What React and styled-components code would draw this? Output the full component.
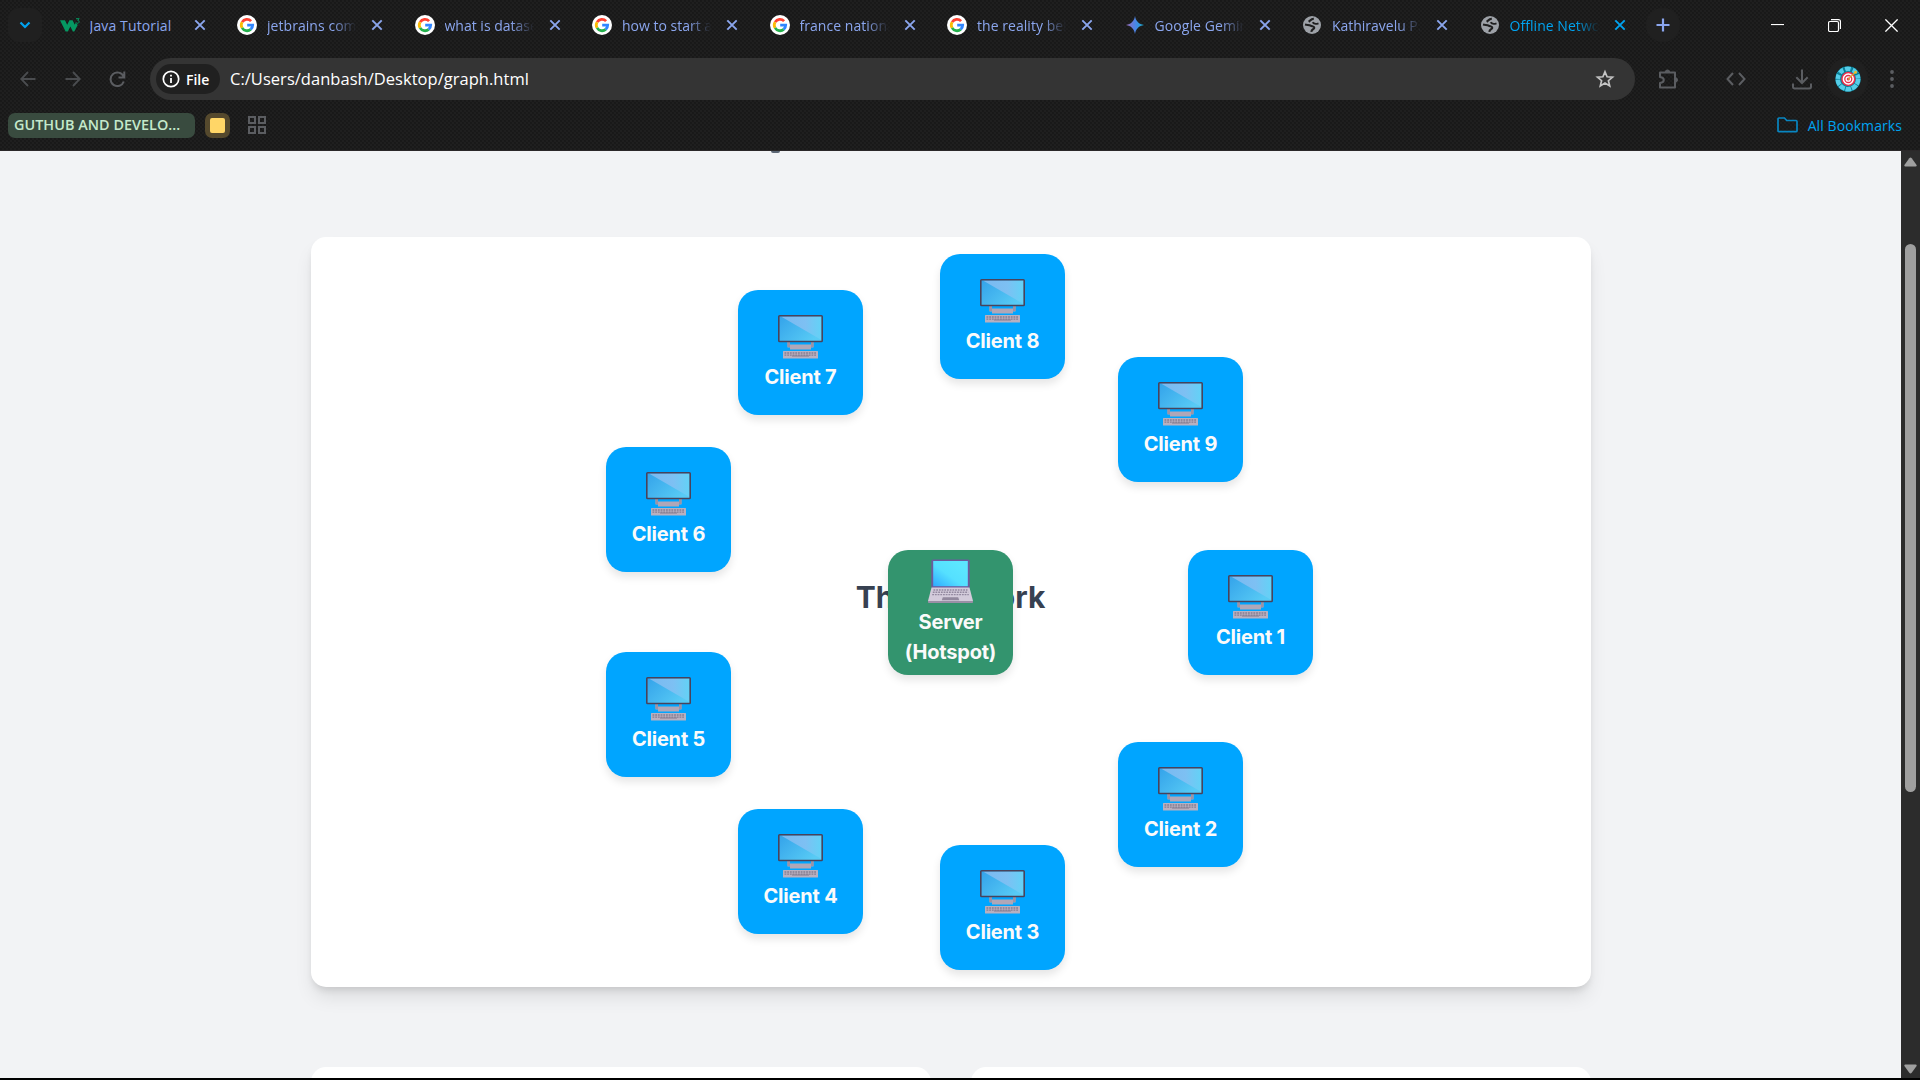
import React from "react";
import styled, { createGlobalStyle } from "styled-components";

const Global = createGlobalStyle`
  *, *::before, *::after { box-sizing: border-box; }
  html, body { margin: 0; padding: 0; overflow: hidden; background: #000; }
  svg { display: block; flex: none; }
`;

const uiFont = `"Open Sans", "Noto Sans", sans-serif`;

const Window = styled.div`
  width: 1920px;
  height: 1080px;
  display: flex;
  flex-direction: column;
  padding-bottom: 2px;
  background: #000;
  font-family: ${uiFont};
  overflow: hidden;
`;

const Chrome = styled.header`
  height: 151px;
  flex: none;
  display: flex;
  flex-direction: column;
  background-color: #1f1f1f;
  background-image: radial-gradient(circle at 1px 1px, #171717 0.6px, transparent 1px),
    radial-gradient(circle at 3px 3px, #171717 0.6px, transparent 1px);
  background-size: 4px 4px;
  border-bottom: 1px solid #2b2829;
`;

const TabStrip = styled.div`
  height: 50px;
  display: flex;
  align-items: center;
  padding-left: 8px;
`;

const TabSearch = styled.div`
  width: 34px;
  height: 34px;
  margin-right: 7.5px;
  border-radius: 11px;
  background: #202020;
  display: grid;
  place-items: center;
`;

const Tab = styled.div`
  width: 177.5px;
  height: 34px;
  flex: none;
  display: flex;
  align-items: center;
  padding-left: 10px;
  color: ${(p) => (p.$active ? "#00a3f0" : "#8ba6ee")};
`;

const Favicon = styled.span`
  width: 20px;
  height: 20px;
  flex: none;
  display: grid;
  place-items: center;
`;

const TabTitle = styled.span`
  width: 89px;
  margin: 1px 15px 0 10px;
  overflow: hidden;
  white-space: nowrap;
  font-size: 14px;
  line-height: 22px;
  letter-spacing: ${(p) => p.$track || 0}px;
  mask-image: ${(p) => (p.$fade ? "linear-gradient(90deg, #000 66px, transparent 89px)" : "none")};
`;

const NewTab = styled.div`
  width: 34px;
  height: 34px;
  margin-left: -1px;
  border-radius: 50%;
  background: #202020;
  display: grid;
  place-items: center;
`;

const WindowControls = styled.div`
  display: flex;
  margin-left: auto;
  height: 50px;
`;

const WindowButton = styled.div`
  width: 57px;
  display: grid;
  place-items: center;
`;

const Toolbar = styled.div`
  height: 58px;
  display: flex;
  align-items: center;
`;

const ToolButton = styled.div`
  width: ${(p) => p.$w}px;
  height: 42px;
  flex: none;
  display: grid;
  place-items: center;
`;

const Omnibox = styled.div`
  width: 1485px;
  height: 42px;
  flex: none;
  display: flex;
  align-items: center;
  padding: 0 20px 0 6px;
  border-radius: 21px;
  background: #343434;
`;

const SchemeChip = styled.div`
  width: 64px;
  height: 30px;
  display: flex;
  align-items: center;
  gap: 6px;
  padding-left: 6px;
  border-radius: 15px;
  background: #202020;
  color: #fff;
  font-size: 14px;
  font-weight: 600;
`;

const Url = styled.span`
  margin-left: 10px;
  color: #fff;
  font-size: 16.5px;
  line-height: 24px;
  letter-spacing: 0.03px;
  flex: 1;
`;

const Avatar = styled.div`
  width: 41px;
  height: 42px;
  border-radius: 50%;
  background: #202020;
  display: grid;
  place-items: center;
`;

const BookmarkBar = styled.div`
  height: 42px;
  display: flex;
  align-items: center;
  padding: 0 18px 8px 8px;
`;

const GroupChip = styled.div`
  width: 187px;
  height: 25px;
  margin-right: 10px;
  padding-left: 6px;
  border-radius: 7px;
  background: #394b3f;
  color: #c5e9cc;
  font-size: 14.4px;
  font-weight: 600;
  line-height: 24px;
  white-space: nowrap;
  letter-spacing: 0.03px;
`;

const ColorChip = styled.div`
  width: 25px;
  height: 25px;
  margin-right: 18px;
  border: 5px solid #55492d;
  border-radius: 7px;
  background: #55492d;
  &::before {
    content: "";
    display: block;
    height: 15px;
    border-radius: 2px;
    background: #ffd667;
  }
`;

const AllBookmarks = styled.div`
  display: flex;
  align-items: center;
  gap: 10px;
  margin-left: auto;
  color: #00a3f0;
  font-size: 14px;
  letter-spacing: 0.08px;
  white-space: nowrap;
`;

const Viewport = styled.div`
  flex: 1;
  min-height: 0;
  display: flex;
`;

const Page = styled.main`
  flex: 1;
  display: flex;
  flex-direction: column;
  align-items: center;
  background: #f2f3f5;
  font-family: Inter, sans-serif;
  overflow: hidden;
`;

const HeadingTail = styled.div`
  width: 9px;
  height: 2px;
  flex: none;
  margin: 0 350px 84px 0;
  align-self: center;
  border-radius: 0 0 5px 5px;
  background: #5c6674;
`;

const Card = styled.section`
  position: relative;
  width: 1280px;
  height: 750px;
  flex: none;
  display: grid;
  place-items: center;
  border-radius: 15px;
  background: #fff;
  box-shadow: 0 12.5px 18.75px -3.75px rgba(0, 0, 0, 0.1), 0 5px 7.5px -2.5px rgba(0, 0, 0, 0.1);
`;

const CardTitle = styled.h2`
  margin: 0 0 30px;
  color: #374151;
  font-size: 30px;
  line-height: 40px;
  font-weight: 700;
`;

const Node = styled.div`
  position: absolute;
  width: 125px;
  height: 125px;
  display: flex;
  flex-direction: column;
  align-items: center;
  justify-content: center;
  padding-top: 2px;
  border-radius: 20px;
  background: ${(p) => (p.$server ? "#33946e" : "#00a5ff")};
  box-shadow: 0 5px 8px rgba(0, 0, 0, 0.1);
  color: #fafafa;
  font-size: 20px;
  line-height: 30px;
  font-weight: 700;
  letter-spacing: -0.2px;
  text-align: center;
`;

const Label = styled.span`
  display: block;
  margin-top: ${(p) => (p.$server ? 2.5 : 3)}px;
`;

const Summary = styled.div`
  width: 1280px;
  display: grid;
  grid-template-columns: 1fr 1fr;
  gap: 40px;
  margin-top: 80px;
`;

const SummaryCard = styled.div`
  height: 200px;
  border-radius: 15px;
  background: #fff;
`;

const Scrollbar = styled.div`
  width: 19px;
  flex: none;
  display: flex;
  flex-direction: column;
  align-items: center;
  padding: 6px 0 4px;
  background: #2c2c2c;
`;

const Thumb = styled.div`
  width: 11px;
  height: 548px;
  margin: 77px 0 auto;
  border-radius: 6px;
  background: #9f9f9f;
`;

const GoogleIcon = () => (
  <svg width="20" height="20" viewBox="0 0 20 20">
    <circle cx="10" cy="10" r="10" fill="#fff" />
    <g fill="none" strokeWidth="2.8">
      <path d="M14.1 6.1A5.7 5.7 0 0 0 5.1 7.1" stroke="#ff4131" />
      <path d="M5.1 7.1A5.7 5.7 0 0 0 5.1 12.9" stroke="#fbbc05" />
      <path d="M5.1 12.9A5.7 5.7 0 0 0 13.7 14.4" stroke="#24b14c" />
      <path d="M13.7 14.4A5.7 5.7 0 0 0 15.7 10.1H10.2" stroke="#3186ff" />
    </g>
  </svg>
);

const SchoolsIcon = () => (
  <svg width="20" height="20" viewBox="0 0 20 20">
    <path d="M0 5.300H5L7.200 9.800 9.400 5.300h3.200L14.800 9.800l.9-2 2 2.200L14.300 16.400h-1.400L10.300 11.400 7.900 16.400H5.600Z" fill="#059862" />
    <path d="M16 3.700h3.200l-1.600 1.600c2.100.1 1.900 3.100-.1 3-.8 0-1.300-.3-1.500-.9" fill="none" stroke="#059862" strokeWidth="1" />
  </svg>
);

const GeminiIcon = () => (
  <svg width="18" height="18" viewBox="0 0 18 18">
    <defs>
      <linearGradient id="gem" x1="0" x2="1">
        <stop offset="0" stopColor="#9b6ab5" />
        <stop offset=".5" stopColor="#4d83e6" />
        <stop offset="1" stopColor="#12aaca" />
      </linearGradient>
    </defs>
    <path d="M9 0C9.700 5 13 8.300 18 9 13 9.700 9.700 13 9 18 8.300 13 5 9.700 0 9 5 8.300 8.300 5 9 0Z" fill="url(#gem)" />
  </svg>
);

const GlobeIcon = () => (
  <svg width="18" height="18" viewBox="0 0 18 18">
    <circle cx="9" cy="9" r="9" fill="#9da1a7" />
    <path d="M10.800 2.900C8 2.700 7.600 4.500 5.600 5.800" fill="none" stroke="#1f1f1f" strokeWidth="2.300" />
    <path d="M2 8.600C4.500 9.200 6.300 8.800 7.600 9.700S11.300 10.100 11.300 11.700 8.600 13.200 8.300 15.800" fill="none" stroke="#1f1f1f" strokeWidth="2.100" />
    <path d="M9.600 6.300C11 8.300 13.300 8.100 15.500 7.300" fill="none" stroke="#1f1f1f" strokeWidth="1.900" />
  </svg>
);

const favicons = { w3: SchoolsIcon, google: GoogleIcon, gemini: GeminiIcon, globe: GlobeIcon };

const tabs = [
  { icon: "w3", title: "Java Tutorial", track: 0.13 },
  { icon: "google", title: "jetbrains community", fade: true, track: 0.05 },
  { icon: "google", title: "what is dataset", fade: true },
  { icon: "google", title: "how to start a", fade: true },
  { icon: "google", title: "france national", fade: true, track: 0.05 },
  { icon: "google", title: "the reality behind", fade: true, track: 0.05 },
  { icon: "gemini", title: "Google Gemini", fade: true, track: 0.08 },
  { icon: "globe", title: "Kathiravelu P.", fade: true, track: -0.02 },
  { icon: "globe", title: "Offline Network", fade: true, active: true, track: 0.05 },
];

const CloseIcon = () => (
  <svg width="12" height="12" viewBox="0 0 12 12">
    <path d="M1.300 1.300l9.400 9.400M10.700 1.300l-9.400 9.400" stroke="currentColor" strokeWidth="1.900" />
  </svg>
);

const AvatarIcon = () => (
  <svg width="26" height="26" viewBox="0 0 26 26">
    <circle cx="13" cy="13" r="12.700" fill="#087e96" />
    <circle cx="13" cy="13" r="10.200" fill="none" stroke="#55cde8" strokeWidth="4.600" strokeDasharray="5.600 .8" />
    <path d="M8 1l2 5M18 1l-2 5M2 7l4 2M24 7l-4 2" stroke="#087e96" strokeWidth="1.600" />
    <circle cx="13.300" cy="13" r="7.200" fill="#e5304c" />
    <circle cx="13.300" cy="13" r="4.900" fill="none" stroke="#fff" strokeWidth="1.500" />
    <circle cx="13.300" cy="13" r="2.200" fill="#e5304c" stroke="#fff" strokeWidth="1.300" />
    <path d="M13 13.500l7-7" stroke="#d9a72b" strokeWidth="1.100" />
    <circle cx="20.500" cy="6.200" r="1.500" fill="#e9bd2b" />
  </svg>
);

const DesktopIcon = () => (
  <svg width="45" height="44" viewBox="0 0 45 44">
    <defs>
      <linearGradient id="screen" x1="0" y1="0" x2="1" y2=".6">
        <stop offset="0" stopColor="#33a2ea" />
        <stop offset="1" stopColor="#58cbf5" />
      </linearGradient>
      <linearGradient id="glare" x1="0" x2="1">
        <stop offset="0" stopColor="#7ab9f0" />
        <stop offset=".6" stopColor="#7dc0f3" />
        <stop offset="1" stopColor="#62d2f7" />
      </linearGradient>
    </defs>
    <path d="M9.500 26h2.500v3.500h21V26h2.500v6.500H33v2H12v-2H9.500Z" fill="#afa7b8" />
    <path d="M9.500 27h2.500v5H9.500ZM33 27h2.500v5H33Z" fill="#9b93a6" />
    <rect x=".8" y=".8" width="43.400" height="25.700" rx=".8" fill="url(#screen)" />
    <path d="M3 1.500h40.500v23.500Z" fill="url(#glare)" />
    <rect x=".8" y=".8" width="43.400" height="25.700" rx=".8" fill="none" stroke="#48435c" strokeWidth="1.600" />
    <rect x="5" y="36" width="35" height="7.500" rx=".6" fill="#b8b0c0" />
    <path d="M6.500 38h32M6.500 40.200h32" stroke="#857d90" strokeWidth="1.300" strokeDasharray="1.800 .9" />
    <path d="M14 41h17" stroke="#857d90" strokeWidth="1" />
  </svg>
);

const LaptopIcon = () => (
  <svg width="45" height="45" viewBox="0 0 45 45">
    <defs>
      <linearGradient id="lap" x1="0" y1="1" x2=".8" y2="0.200">
        <stop offset="0" stopColor="#2eabff" />
        <stop offset=".55" stopColor="#55e0ff" />
        <stop offset="1" stopColor="#5ce6ff" />
      </linearGradient>
    </defs>
    <rect x="3.300" y=".5" width="38.400" height="28.500" rx="1.500" fill="#6b5b9e" />
    <rect x="5.200" y="2" width="34.600" height="25.200" fill="url(#lap)" />
    <path d="M3.500 28.500h38L45 42H0Z" fill="#d3cbdb" />
    <path d="M0 42h45v1.200q0 .8-.8.800H.8Q0 44 0 43.200Z" fill="#9a8fa6" />
    <path d="M5.500 31h34M4.800 33.300h35.400M4.200 35.600h36.600" stroke="#9389a0" strokeWidth="1.400" strokeDasharray="1.800 .9" />
    <path d="M14.800 38.200h15.400l1 3H13.800Z" fill="#92889e" />
  </svg>
);

const RADIUS = 300;
const clients = Array.from({ length: 9 }, (_, i) => {
  const a = (i * 40 * Math.PI) / 180;
  return {
    name: `Client ${i + 1}`,
    left: Math.round(577.5 + RADIUS * Math.cos(a) + 0.5) - 0.5,
    top: Math.round(312.5 + RADIUS * Math.sin(a)),
  };
});

export default function App() {
  return (
    <Window>
      <Global />
      <Chrome>
        <TabStrip>
          <TabSearch>
            <svg width="12" height="8" viewBox="0 0 12 8"><path d="M1.500 1.500 6 6l4.500-4.500" fill="none" stroke="#00a3f0" strokeWidth="2.200" /></svg>
          </TabSearch>
          {tabs.map((t) => {
            const Icon = favicons[t.icon];
            return (
              <Tab key={t.title} $active={t.active}>
                <Favicon><Icon /></Favicon>
                <TabTitle $fade={t.fade} $track={t.track}>{t.title}</TabTitle>
                <CloseIcon />
              </Tab>
            );
          })}
          <NewTab>
            <svg width="14" height="14" viewBox="0 0 14 14"><path d="M7 .5v13M.5 7h13" stroke="#8ba6ee" strokeWidth="2.200" /></svg>
          </NewTab>
          <WindowControls>
            <WindowButton><svg width="13" height="2"><path d="M0 1h13" stroke="#fff" strokeWidth="1.200" transform="translate(0 -.5)" /></svg></WindowButton>
            <WindowButton>
              <svg width="13" height="13" viewBox="0 0 13 13" fill="none" stroke="#fff">
                <rect x=".5" y="2.500" width="10" height="10" rx="1.500" strokeWidth="1.200" />
                <path d="M3 .6h7.500q2 0 2 2V10" strokeWidth="1.200" />
              </svg>
            </WindowButton>
            <WindowButton><svg width="13" height="13" viewBox="0 0 13 13"><path d="M.4.4l12.200 12.200M12.600.4.4 12.600" stroke="#fff" strokeWidth="1.300" /></svg></WindowButton>
          </WindowControls>
        </TabStrip>

        <Toolbar>
          <ToolButton $w={55}>
            <svg width="16" height="16" viewBox="0 0 16 16" fill="none" stroke="#4a4c4f" strokeWidth="1.900"><path d="M15.500 8H1.500M8 1 1.300 8 8 15" /></svg>
          </ToolButton>
          <ToolButton $w={35}>
            <svg width="16" height="16" viewBox="0 0 16 16" fill="none" stroke="#4a4c4f" strokeWidth="1.900"><path d="M.5 8h14M8 1l6.700 7L8 15" /></svg>
          </ToolButton>
          <ToolButton $w={55}>
            <svg width="17" height="17" viewBox="0 0 17 17" fill="none" stroke="#5b5d61" strokeWidth="2"><path d="M14.800 10.500A6.800 6.800 0 1 1 14.600 5.500M15.300 .5v6H9.500" /></svg>
          </ToolButton>
          <ToolButton $w={5} />
          <Omnibox>
            <SchemeChip>
              <svg width="18" height="18" viewBox="0 0 18 18" fill="none" stroke="#fff"><circle cx="9" cy="9" r="7.700" strokeWidth="1.700" /><path d="M9 8v5M9 4.800v1.800" strokeWidth="1.800" /></svg>
              File
            </SchemeChip>
            <Url>C:/Users/danbash/Desktop/graph.html</Url>
            <svg width="20" height="20" viewBox="0 0 20 20" fill="none" stroke="#c4c4c4" strokeWidth="1.700"><path d="M10 2.800l2.100 5 5.400.4-4.100 3.500 1.300 5.200L10 14.100l-4.700 2.800 1.300-5.200L2.500 8.200l5.400-.4Z" /></svg>
          </Omnibox>
          <ToolButton $w={67}>
            <svg width="21" height="21" viewBox="0 0 21 21" fill="none" stroke="#5b5d61" strokeWidth="2"><path d="M2 3.500H17V18.500H2V14q3.800-.5 3.800-3T2 8Z" strokeLinejoin="round" /><path d="M7.300 3Q7.300 1 9.500 1t2.200 2ZM17.500 8.700q2 0 2 2.200t-2 2.200Z" fill="#5b5d61" strokeWidth="1" /></svg>
          </ToolButton>
          <ToolButton $w={67}>
            <svg width="20" height="14" viewBox="0 0 20 14" fill="none" stroke="#5b5d61" strokeWidth="2"><path d="M7 1 1.500 7 7 13M13 1l5.500 6L13 13" /></svg>
          </ToolButton>
          <ToolButton $w={8} />
          <ToolButton $w={50}>
            <svg width="20" height="21" viewBox="0 0 20 21" fill="none" stroke="#5b5d61" strokeWidth="2"><path d="M10 .5v13M4.300 8.300 10 14l5.700-5.700M1 14.500v3.300q0 1.700 1.700 1.700h14.600q1.700 0 1.700-1.700v-3.300" /></svg>
          </ToolButton>
          <Avatar><AvatarIcon /></Avatar>
          <ToolButton $w={48}>
            <svg width="4" height="18" viewBox="0 0 4 18" fill="#5b5d61"><circle cx="2" cy="2" r="1.900" /><circle cx="2" cy="9" r="1.900" /><circle cx="2" cy="16" r="1.900" /></svg>
          </ToolButton>
        </Toolbar>

        <BookmarkBar>
          <GroupChip>GUTHUB AND DEVELO...</GroupChip>
          <ColorChip />
          <svg width="18" height="18" viewBox="0 0 18 18" fill="none" stroke="#5b5d61" strokeWidth="2"><path d="M1 1h6v6H1ZM11 1h6v6h-6ZM1 11h6v6H1ZM11 11h6v6h-6Z" /></svg>
          <AllBookmarks>
            <svg width="21" height="16" viewBox="0 0 21 16" fill="none" stroke="#0886c2" strokeWidth="1.700"><path d="M1 13.500V2q0-1 1-1h5.500l2.200 2.500H19q1 0 1 1v9.200q0 1-1 1H2q-1 0-1-1Z" /></svg>
            All Bookmarks
          </AllBookmarks>
        </BookmarkBar>
      </Chrome>

      <Viewport>
        <Page>
          <HeadingTail />
          <Card>
            <CardTitle>The Network</CardTitle>
            {clients.map((c) => (
              <Node key={c.name} style={{ left: c.left, top: c.top }}>
                <DesktopIcon />
                <Label>{c.name}</Label>
              </Node>
            ))}
            <Node $server style={{ left: 577.5, top: 312.5 }}>
              <LaptopIcon />
              <Label $server>Server<br />(Hotspot)</Label>
            </Node>
          </Card>
          <Summary>
            <SummaryCard />
            <SummaryCard />
          </Summary>
        </Page>
        <Scrollbar>
          <svg width="13" height="10" viewBox="0 0 13 10"><path d="M5.300 1.200q1.200-1.500 2.400 0L12.600 8q.4 1.500-1 1.500H1.400Q0 9.500.4 8Z" fill="#9f9f9f" /></svg>
          <Thumb />
          <svg width="13" height="10" viewBox="0 0 13 10"><path d="M5.300 8.800q1.200 1.500 2.400 0L12.600 2q.4-1.500-1-1.500H1.400Q0 .5.400 2Z" fill="#9f9f9f" /></svg>
        </Scrollbar>
      </Viewport>
    </Window>
  );
}
